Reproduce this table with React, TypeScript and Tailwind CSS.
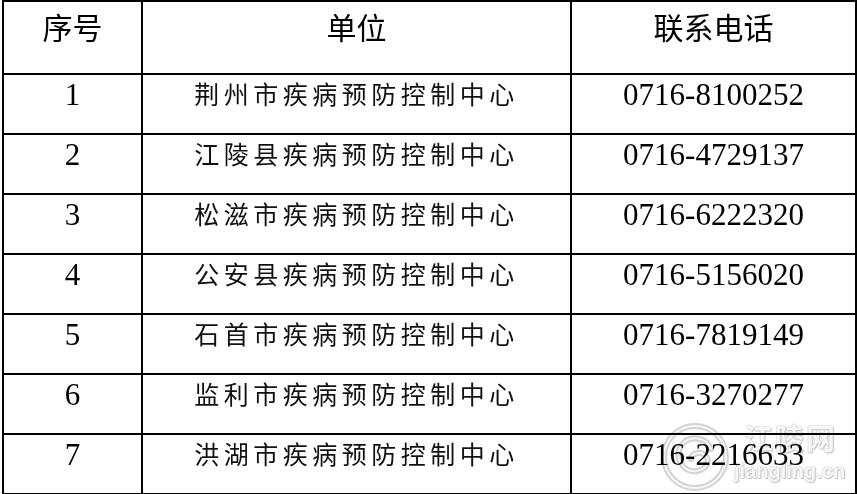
import React from "react";

const rows = [
  { no: "1", name: "荆州市疾病预防控制中心", tel: "0716-8100252" },
  { no: "2", name: "江陵县疾病预防控制中心", tel: "0716-4729137" },
  { no: "3", name: "松滋市疾病预防控制中心", tel: "0716-6222320" },
  { no: "4", name: "公安县疾病预防控制中心", tel: "0716-5156020" },
  { no: "5", name: "石首市疾病预防控制中心", tel: "0716-7819149" },
  { no: "6", name: "监利市疾病预防控制中心", tel: "0716-3270277" },
  { no: "7", name: "洪湖市疾病预防控制中心", tel: "0716-2216633" },
];

const cjk = "font-['Noto_Sans_CJK_SC','Noto_Sans',sans-serif]";
const serif = "font-['Liberation_Serif','Times_New_Roman',serif]";

// faint site watermark in the bottom-right corner
function Watermark() {
  const glow = "0 0 1px #b0b0b0, 0 0 2px #bdbdbd, 1px 1px 1px #c0c0c0";
  return (
    <div className="absolute left-[661px] top-[422px] flex items-start pointer-events-none select-none mix-blend-multiply opacity-90">
      <svg width="68" height="70" viewBox="0 0 68 70">
        <circle cx="34" cy="35" r="31" fill="none" stroke="#cfcfcf" strokeWidth="6" />
        <circle cx="34" cy="35" r="31" fill="none" stroke="#f6f6f6" strokeWidth="2" />
        <path
          d="M50 27 C 46 15, 28 12, 20 24 C 13 36, 22 51, 36 49 C 46 47, 50 39, 44 33 C 39 29, 31 31, 30 37"
          fill="none"
          stroke="#cdcdcd"
          strokeWidth="6"
          strokeLinecap="round"
        />
        <path
          d="M50 27 C 46 15, 28 12, 20 24 C 13 36, 22 51, 36 49 C 46 47, 50 39, 44 33 C 39 29, 31 31, 30 37"
          fill="none"
          stroke="#f6f6f6"
          strokeWidth="2"
          strokeLinecap="round"
        />
      </svg>
      <div className="ml-[15px] flex flex-col items-start">
        <div
          className={`${cjk} text-[29px] leading-[30px] font-bold text-[#f7f7f7] tracking-[2px]`}
          style={{ textShadow: glow }}
        >
          江陵网
        </div>
        <div
          className="font-['Liberation_Sans',Arial,sans-serif] text-[20px] leading-[22px] font-bold text-[#f7f7f7] -ml-[10px] mt-[8px]"
          style={{ textShadow: glow }}
        >
          jiangling.cn
        </div>
      </div>
    </div>
  );
}

export default function App() {
  return (
    <div className="relative w-[857px] h-[494px] bg-white overflow-hidden">
      <div className="pl-[2px]">
        <table className="border-collapse w-[853px] table-fixed text-black">
          <colgroup>
            <col className="w-[139px]" />
            <col className="w-[429px]" />
            <col className="w-[285px]" />
          </colgroup>
          <thead>
            <tr className="h-[73px]">
              {["序号", "单位", "联系电话"].map((h) => (
                <th
                  key={h}
                  className={`border-2 border-black align-top pt-[9px] text-center font-normal text-[30px] leading-[30px] ${cjk}`}
                >
                  {h}
                </th>
              ))}
            </tr>
          </thead>
          <tbody>
            {rows.map((r) => (
              <tr key={r.no} className="h-[60px]">
                <td className={`border-2 border-black align-top pt-[4px] text-center text-[31px] leading-[31px] ${serif}`}>
                  {r.no}
                </td>
                <td className="border-2 border-black align-top pt-[4px] text-center">
                  <span className={`${cjk} text-[25px] leading-[29px] tracking-[4.5px] text-[#111]`}>
                    {r.name}
                  </span>
                </td>
                <td className={`border-2 border-black align-top pt-[4px] text-center text-[31px] leading-[31px] ${serif}`}>
                  {r.tel}
                </td>
              </tr>
            ))}
          </tbody>
        </table>
      </div>
      <Watermark />
    </div>
  );
}
